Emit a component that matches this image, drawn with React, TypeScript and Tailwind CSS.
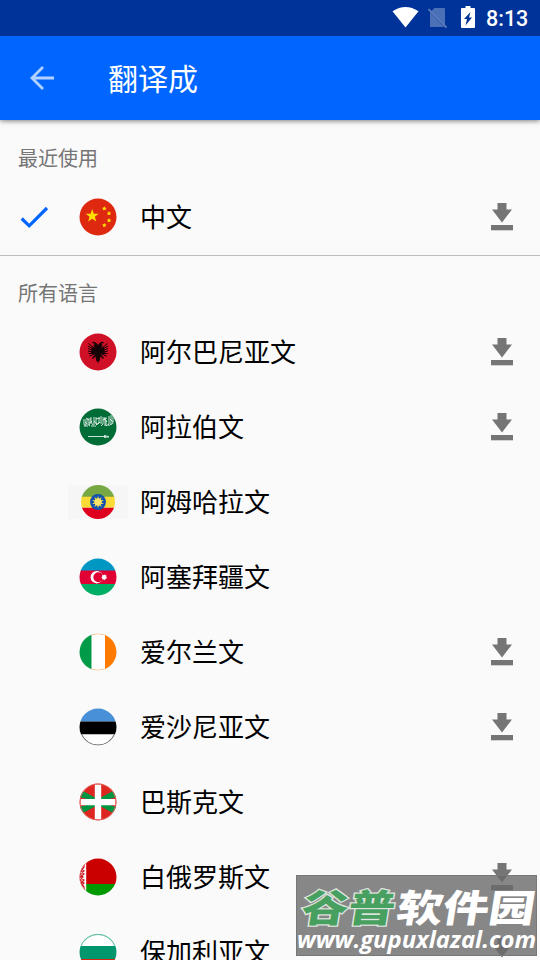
import React from "react";

type Language = {
    name: string;
    flag: React.ReactNode;
    download?: boolean;
    selected?: boolean;
    boxed?: boolean;
};

const star = (cx: number, cy: number, r: number, points = 5, inner = 0.4) =>
    Array.from({ length: points * 2 }, (_, i) => {
        const radius = i % 2 ? r * inner : r;
        const angle = (Math.PI * i) / points - Math.PI / 2;
        return `${cx + radius * Math.cos(angle)},${cy + radius * Math.sin(angle)}`;
    }).join(" ");

const recent: Language[] = [
    {
        name: "中文",
        selected: true,
        download: true,
        flag: (
            <>
                <path fill="#de2910" d="M0 0h38v38H0z" />
                <g fill="#ffde00">
                    <polygon points={star(13.2, 18, 6.9)} />
                    <polygon points={star(25.3, 10.6, 2.3, 5, 0.55)} />
                    <polygon points={star(30, 15.4, 2.3, 5, 0.55)} />
                    <polygon points={star(30, 22.4, 2.3, 5, 0.55)} />
                    <polygon points={star(25.3, 27.2, 2.3, 5, 0.55)} />
                </g>
            </>
        ),
    },
];

const languages: Language[] = [
    {
        name: "阿尔巴尼亚文",
        download: true,
        flag: (
            <>
                <path fill="#d01027" d="M0 0h38v38H0z" />
                <g fill="none" stroke="#140306">
                    <path
                        strokeWidth="1"
                        d="M9.500 10.500 15 15M9 13l6 3.500M9 15.500l6 2.500M9 18l6 1.500M9.500 20.500 15 20.500M10.500 23l5-2M28.500 10.500 23 15M29 13l-6 3.500M29 15.500l-6 2.500M29 18l-6 1.500M28.500 20.500 23 20.500M27.500 23l-5-2"
                    />
                    <path
                        strokeWidth="1.500"
                        d="M19 14.500q-1-5-5.500-5M19 14.500q1-5 5.500-5M17.500 21 13.500 25.500M20.500 21l4 4.500M19 20v9.500M17 27h4"
                    />
                </g>
                <path
                    fill="#140306"
                    d="M19 14.500l-2.500-4-2 1.500 1 3-2.500-1-1 6 4 1.500L17 26l2 2 2-2 1-4.500 4-1.500-1-6-2.500 1 1-3-2-1.500z"
                />
            </>
        ),
    },
    {
        name: "阿拉伯文",
        download: true,
        flag: (
            <>
                <path fill="#006d36" d="M0 0h38v38H0z" />
                <g fill="none" stroke="#fff" strokeOpacity=".8" strokeWidth="1">
                    <path d="M5 11v5q0 2 2 1v-6m2-1v4q0 2 2 1v-5M7 10l3 2M5 18h4m1-1 3-4m-1-4v5l2 3m1-8v8m-3 1h5m0-9v6q2 2 3 0v-6m-3 2 4-1m1-2v8m-5 1 4-3m3-5v7l-2 2m4-9v9m-2-6 4-2m-1 2v6l3-2m0-8v8m2-9v9q-1 2-3 1m5-9v7q-1 2-2 1M6 14l5 4m4-5 3 4m7-7 3 4m3-3 3 3" />
                    <path d="M9 28.500h18" strokeWidth="1.200" />
                    <path d="M25 27.300l5 1.500-5 .7" />
                </g>
            </>
        ),
    },
    {
        name: "阿姆哈拉文",
        boxed: true,
        flag: (
            <>
                <path fill="#78a844" d="M0 0h38v14H0z" />
                <path fill="#fddb37" d="M0 13h38v12.500H0z" />
                <path fill="#df0020" d="M0 25.500h38V38H0z" />
                <circle cx="19" cy="19" r="8.900" fill="#1251ad" />
                <polygon points={star(19, 19, 7, 10, 0.5)} fill="#ffe04b" />
                <circle cx="19" cy="19" r="3.800" fill="#fbe36a" />
            </>
        ),
    },
    {
        name: "阿塞拜疆文",
        flag: (
            <>
                <path fill="#0098c3" d="M0 0h38v13H0z" />
                <path fill="#e00034" d="M0 12.500h38v13.500H0z" />
                <path fill="#00ae65" d="M0 26h38v12H0z" />
                <circle cx="17.800" cy="19.200" r="6.200" fill="#fff" />
                <circle cx="19.400" cy="19.200" r="5" fill="#e00034" />
                <polygon points={star(25.200, 19.200, 3, 8, 0.7)} fill="#fff" />
            </>
        ),
    },
    {
        name: "爱尔兰文",
        download: true,
        flag: (
            <>
                <path fill="#009a49" d="M0 0h13v38H0z" />
                <path fill="#fff" d="M12.500 0h13.500v38H12.500z" />
                <path fill="#ff7a00" d="M26 0h12v38H26z" />
                <path
                    d="M12 2a18.200 18.200 0 0 1 14 0M12 36a18.200 18.200 0 0 0 14 0"
                    fill="none"
                    stroke="#ffb778"
                />
            </>
        ),
    },
    {
        name: "爱沙尼亚文",
        download: true,
        flag: (
            <>
                <path fill="#4891d9" d="M0 0h38v13.500H0z" />
                <path fill="#000" d="M0 13.500h38V26.500H0z" />
                <path fill="#fff" d="M0 26.500h38V38H0z" />
                <path d="M2.200 26a18.200 18.200 0 0 0 33.600 0" fill="none" stroke="#666" strokeWidth="1.200" />
            </>
        ),
    },
    {
        name: "巴斯克文",
        flag: (
            <>
                <path fill="#de2620" d="M0 0h38v38H0z" />
                <path
                    fill="#009543"
                    d="M4 8 19 16 34 8l4 6-19 5 19 5-4 6-15-8-15 8-4-6 19-5L0 14z"
                />
                <path fill="#fff" d="M15.800 1.500h6.400v35h-6.400z" />
                <path fill="#fff" d="M1.500 16h35v6.200h-35z" />
                <circle cx="19" cy="19" r="18" fill="none" stroke="#e66a65" strokeWidth="1" />
            </>
        ),
    },
    {
        name: "白俄罗斯文",
        download: true,
        flag: (
            <>
                <path fill="#ca0000" d="M0 0h38v26H0z" />
                <path fill="#009900" d="M0 26h38v12H0z" />
                <path fill="#fff" d="M0 0h7.200v38H0z" />
                <path
                    d="M5 5v4L2 13l3 3-4 3 4 3-3 3 3 4v4M2 10l3 3-4 3 3 3-3 3 4 3-3 3"
                    fill="none"
                    stroke="#d0202a"
                    strokeWidth="1.300"
                />
                <path d="M6.200 6a18.200 18.200 0 0 0 0 26" fill="none" stroke="#d55" strokeWidth=".8" />
            </>
        ),
    },
    {
        name: "保加利亚文",
        download: true,
        flag: (
            <>
                <path fill="#fff" d="M0 0h38v13H0z" />
                <path fill="#00966e" d="M0 13h38v13H0z" />
                <path fill="#d62612" d="M0 26h38v12H0z" />
                <path d="M2 13a18.200 18.200 0 0 1 34 0" fill="none" stroke="#66c0a8" strokeWidth="1.200" />
            </>
        ),
    },
];

function StatusBar() {
    return (
        <div className="relative z-10 h-9 shrink-0 bg-[#003399] flex items-center text-white">
            <svg className="ml-[392px] shrink-0" width="27" height="36" viewBox="0 0 27 36">
                <path fill="#fff" d="M.5 11.200Q13.500 2.600 26.500 11.200L13.500 27.500z" />
            </svg>
            <svg className="ml-2 shrink-0" width="22" height="36" viewBox="0 0 22 36">
                <path
                    fill="#4c70b7"
                    d="M7.500 8H17q1 0 1 1v16L4.500 11zM3 12 17 27H4q-1 0-1-1z"
                />
                <path d="M1.500 9.200 19.500 27.600" stroke="#5f7fbf" strokeWidth="1.800" />
            </svg>
            <svg className="ml-3 shrink-0" width="14" height="36" viewBox="0 0 14 36">
                <path
                    fill="#fff"
                    fillRule="evenodd"
                    d="M4.500 6h5v2H13q1 0 1 1v18q0 1-1 1H1q-1 0-1-1V9q0-1 1-1h3.500zM9.500 12 3 19h3l-1.500 6.500 6.500-8H8z"
                />
            </svg>
            <span className="ml-[11px] pt-[2px] font-[Roboto,sans-serif] font-medium text-[21.500px] leading-none">
                8:13
            </span>
        </div>
    );
}

function DownloadIcon() {
    return (
        <svg width="22" height="28" viewBox="0 0 22 28" fill="#757575">
            <path d="M6.500 0h9v6.500h5.500L11 19.500 1 6.500h5.500z" />
            <path d="M0 22h22v5.300H0z" />
        </svg>
    );
}

function LanguageRow({ name, flag, download, selected, boxed }: Language) {
    return (
        <li className="h-[75px] shrink-0 pb-px flex items-center">
            <div className="w-[68px] shrink-0 pl-5">
                {selected && (
                    <svg width="29" height="24" viewBox="0 0 29 24">
                        <path
                            d="M1.700 13.500 9.200 20.800 27 3"
                            fill="none"
                            stroke="#0066ff"
                            strokeWidth="3.200"
                        />
                    </svg>
                )}
            </div>
            <div
                className={
                    boxed
                        ? "w-[60px] h-[34px] bg-[#f6f6f6] flex items-center justify-center"
                        : "w-[60px] flex items-center justify-center"
                }
            >
                {boxed ? (
                    <svg className="shrink-0 size-[34px] rounded-full" viewBox="0 0 38 38">
                        {flag}
                    </svg>
                ) : (
                    <svg
                        className="shrink-0 size-[38px] [clip-path:circle(18.500px)]"
                        viewBox="0 0 38 38"
                    >
                        {flag}
                    </svg>
                )}
            </div>
            <span className="ml-3 pb-[2px] text-[26px] leading-[38px] text-black">{name}</span>
            {download && (
                <div className="ml-auto mr-[27px]">
                    <DownloadIcon />
                </div>
            )}
        </li>
    );
}

function Watermark() {
    return (
        <div className="absolute left-[296px] top-[875px] w-[241px] h-[81px] bg-[#6a6a6a]/80 border border-[#777]">
            <svg className="block overflow-visible" width="241" height="81" viewBox="0 0 241 81">
                <g
                    fontFamily="'Noto Sans CJK SC', sans-serif"
                    fontWeight="900"
                    fontSize="38"
                    transform="translate(3 46) skewX(-9)"
                >
                    <text
                        textLength="93"
                        lengthAdjust="spacingAndGlyphs"
                        fill="#48a060"
                        stroke="#dfe5df"
                        strokeWidth="2.500"
                        paintOrder="stroke"
                    >
                        谷普
                    </text>
                    <text x="95" textLength="138" lengthAdjust="spacingAndGlyphs" fill="#fff">
                        软件园
                    </text>
                </g>
                <text
                    x="0"
                    y="72"
                    textLength="239"
                    lengthAdjust="spacingAndGlyphs"
                    fontFamily="'Open Sans', sans-serif"
                    fontWeight="700"
                    fontStyle="italic"
                    fontSize="24"
                    fill="#fff"
                >
                    www.gupuxlazal.com
                </text>
            </svg>
        </div>
    );
}

export default function App() {
    return (
        <main className="relative w-[540px] h-[960px] overflow-hidden bg-[#fafafa] flex flex-col font-['Noto_Sans_CJK_SC',sans-serif]">
            <StatusBar />
            <header className="relative h-[84px] shrink-0 bg-[#0066ff] flex items-center shadow-[0_1px_5px_rgba(0,0,0,0.5)]">
                <svg className="ml-[30px]" width="24" height="24" viewBox="0 0 24 24">
                    <path
                        d="M24 12H2M13 1 2 12l11 11"
                        fill="none"
                        stroke="#b3d1ff"
                        strokeWidth="2.800"
                    />
                </svg>
                <h1 className="ml-[54px] pb-[3px] text-[30px] leading-none text-white">翻译成</h1>
            </header>

            <h2 className="h-[60px] shrink-0 pt-[17px] pl-[18px] text-[20px] text-[#757575] leading-[42px]">
                最近使用
            </h2>
            <ul className="shrink-0 h-[76px] border-b border-[#bdbdbd]">
                {recent.map((item) => (
                    <LanguageRow key={item.name} {...item} />
                ))}
            </ul>

            <h2 className="h-[59px] shrink-0 pt-4 pl-[18px] text-[20px] text-[#757575] leading-[42px]">
                所有语言
            </h2>
            <ul>
                {languages.map((item) => (
                    <LanguageRow key={item.name} {...item} />
                ))}
            </ul>

            <Watermark />
        </main>
    );
}
